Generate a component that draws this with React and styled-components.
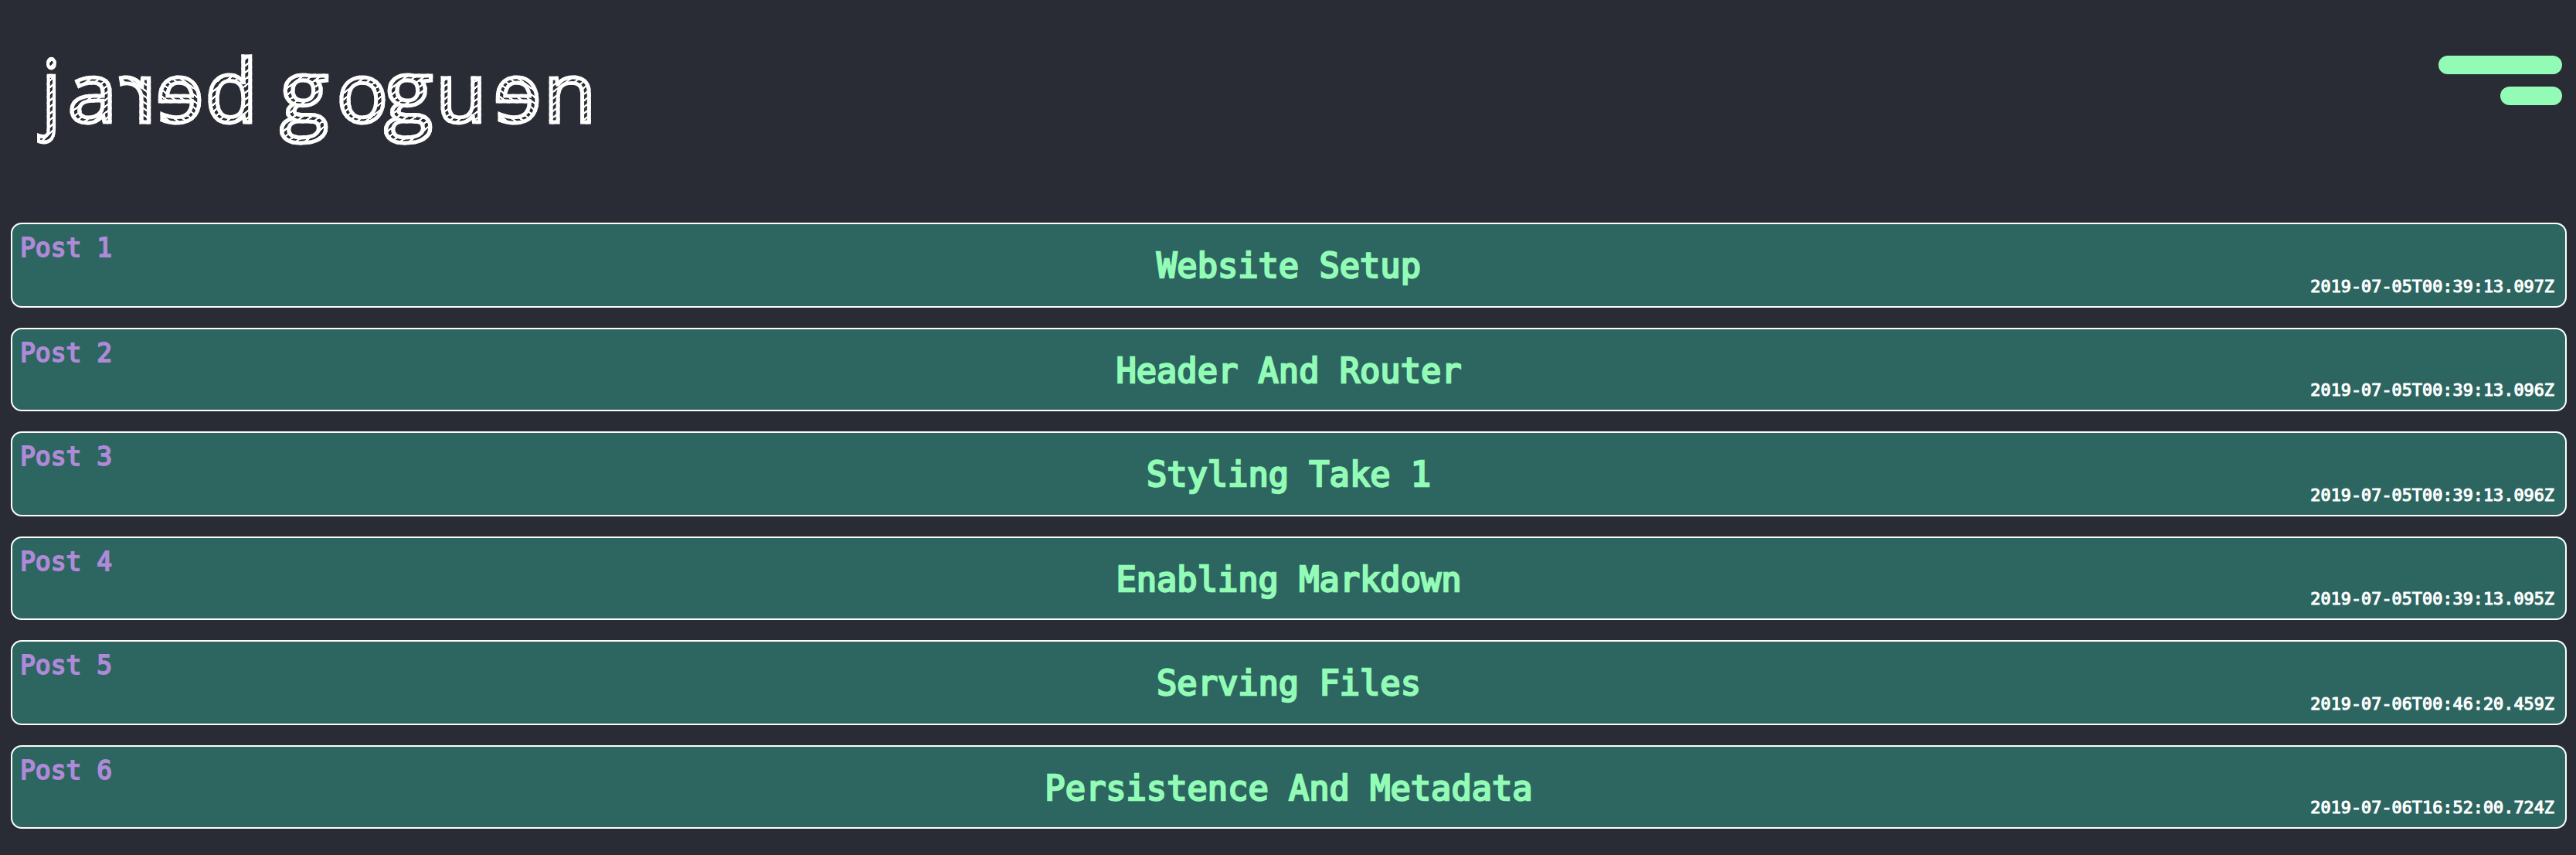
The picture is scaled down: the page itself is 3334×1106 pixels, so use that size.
import React from 'react';
import styled, { createGlobalStyle } from 'styled-components';

const GlobalStyle = createGlobalStyle`
  * { box-sizing: border-box; }
  body { margin: 0; background: #2a2c35; font-family: 'DejaVu Sans Mono', monospace; }
`;

const Page = styled.div`
  width: 100%;
  height: 1106px;
  overflow: hidden;
`;

const Header = styled.header`
  display: flex;
  justify-content: space-between;
  align-items: flex-start;
  height: 288px;
  padding: 0 18px 0 50px;
`;

const Logo = styled.h1`
  display: flex;
  margin: 0;
  padding-top: 43px;
  font: 400 106px/148px 'Open Sans', sans-serif;
`;

const Cell = styled.span`
  display: flex;
  justify-content: center;
  width: ${(p) => p.$w}px;
`;

const Letter = styled.span`
  flex: none;
  padding: 0 4px;
  color: transparent;
  -webkit-text-stroke: 4.8px #fff;
  background: repeating-linear-gradient(-38deg, #fff 0 2px, #2a2c35 2.6px 6.5px);
  -webkit-background-clip: text;
  background-clip: text;
  transform: scale(${(p) => p.$sx}, ${(p) => p.$sy || 1});
  transform-origin: 50% 115px;
`;

const Menu = styled.button`
  display: flex;
  flex-direction: column;
  align-items: flex-end;
  gap: 16px;
  margin-top: 72px;
  padding: 0;
  border: 0;
  background: none;
`;

const Bar = styled.span`
  width: ${(p) => p.$w}px;
  height: 24px;
  border-radius: 12px;
  background: #92fcb7;
`;

const Posts = styled.main`
  display: flex;
  flex-direction: column;
  gap: 26px;
  padding: 0 12px 0 14px;
`;

const Post = styled.article`
  display: grid;
  grid-template-columns: 1fr auto 1fr;
  height: 110px;
  padding: 0 10px;
  border: 2px solid #fff;
  border-radius: 14px;
  background: #2d6660;

  &:nth-child(even) {
    height: 108px;
  }
`;

const Label = styled.span`
  align-self: start;
  margin-top: 11px;
  font-size: 33px;
  line-height: 40px;
  color: #ae8ad8;
  -webkit-text-stroke: 1.8px #ae8ad8;
`;

const Title = styled.h2`
  align-self: start;
  margin: 28px 0 0;
  font-size: 43.7px;
  font-weight: 400;
  line-height: 52px;
  color: #92fcb7;
  -webkit-text-stroke: 2.4px #92fcb7;
`;

const Stamp = styled.time`
  align-self: end;
  justify-self: end;
  margin: 0 4px 12px 0;
  font-size: 21.85px;
  line-height: 26px;
  color: #fff;
  -webkit-text-stroke: 1.1px #fff;
`;

const letters = [
  ['j', 33, 0.85, 1.03],
  ['a', 73, 1.08],
  ['r', 45, -1.1],
  ['e', 64, -1.05],
  ['d', 69, 1.04, 1.06],
  [' ', 22, 1],
  ['g', 75, 1.08, 1.05],
  ['o', 75, 1.04],
  ['g', 45, 1.08, 1.05],
  ['u', 92, 1],
  ['e', 53, -1.05],
  ['n', 83, 1.04],
];

const posts = [
  ['Website Setup', '2019-07-05T00:39:13.097Z'],
  ['Header And Router', '2019-07-05T00:39:13.096Z'],
  ['Styling Take 1', '2019-07-05T00:39:13.096Z'],
  ['Enabling Markdown', '2019-07-05T00:39:13.095Z'],
  ['Serving Files', '2019-07-06T00:46:20.459Z'],
  ['Persistence And Metadata', '2019-07-06T16:52:00.724Z'],
];

export default function App() {
  return (
    <Page>
      <GlobalStyle />
      <Header>
        <Logo>
          {letters.map(([ch, w, sx, sy], i) => (
            <Cell key={i} $w={w}>
              <Letter $sx={sx} $sy={sy}>{ch}</Letter>
            </Cell>
          ))}
        </Logo>
        <Menu aria-label="Menu">
          <Bar $w={160} />
          <Bar $w={80} />
        </Menu>
      </Header>
      <Posts>
        {posts.map(([title, date], i) => (
          <Post key={title}>
            <Label>Post {i + 1}</Label>
            <Title>{title}</Title>
            <Stamp>{date}</Stamp>
          </Post>
        ))}
      </Posts>
    </Page>
  );
}
